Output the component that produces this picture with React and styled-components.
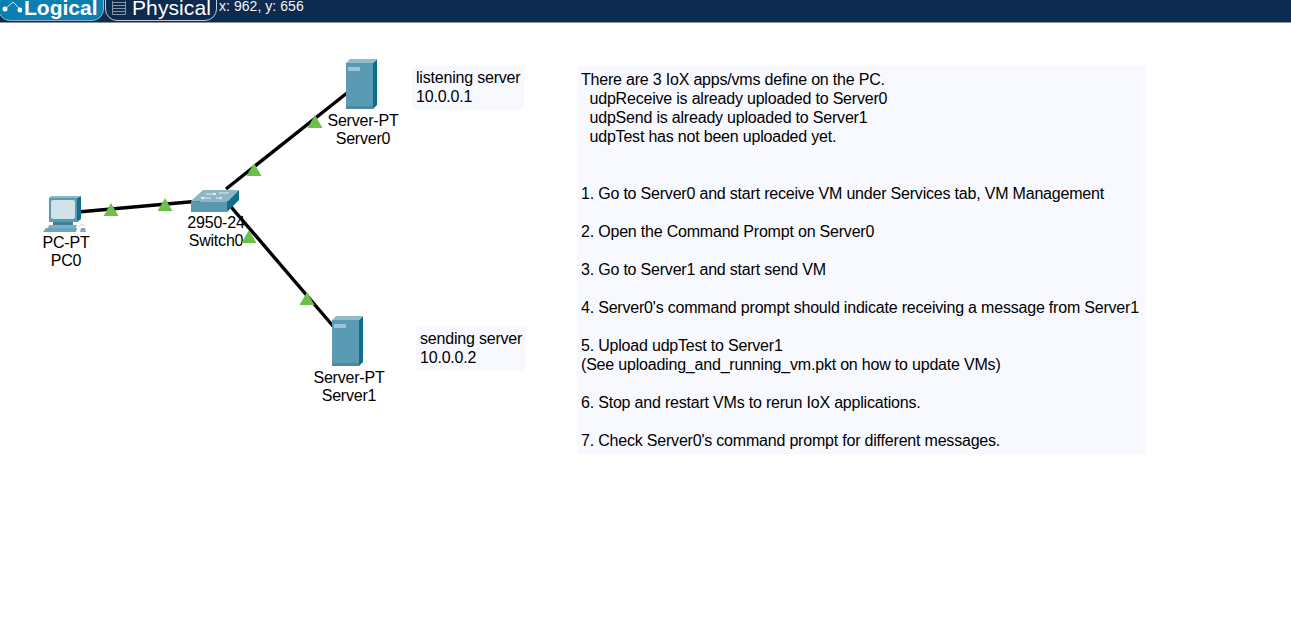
import React from 'react';
import styled, { createGlobalStyle } from 'styled-components';

const Global = createGlobalStyle`
  html, body { margin: 0; padding: 0; background: #fff; overflow: hidden; }
  body { font-family: "Liberation Sans", Arial, sans-serif; }
`;
const Page = styled.div`width: 1291px; height: 632px; overflow: hidden; display: flex; flex-direction: column;`;
const Toolbar = styled.header`
  height: 23px; box-sizing: border-box; flex: none; background: #0d2a4f; border-bottom: 1px solid #8a93a0;
  display: flex; align-items: flex-start; overflow: hidden; color: #fff;
`;
const Tab = styled.div`
  height: 29px; box-sizing: border-box; flex: none; margin-top: -8px; display: flex; align-items: flex-start;
  gap: ${p => p.$gap}px; width: ${p => p.$w}px; padding: 4px 0 0 ${p => p.$pl}px;
  margin-left: ${p => p.$ml}px; margin-right: ${p => p.$mr}px;
  border: 1px solid ${p => p.$active ? '#8fb4cf' : '#c5ccd6'}; border-radius: 0 0 12px 12px;
  background: ${p => p.$active ? '#0b7fb0' : 'transparent'};
  font-size: 21px; line-height: 21px; font-weight: ${p => p.$active ? 700 : 400};
  letter-spacing: ${p => p.$active ? 0 : 0.1}px; white-space: nowrap;
  svg { flex: none; margin-top: 4px; }
`;
const Coords = styled.span`font-size: 14px; line-height: 14px; margin: -1px 0 0 1px; letter-spacing: 0.05px; color: #f2f4f7; white-space: nowrap;`;
const Canvas = styled.main`position: relative; flex: 1;`;
const Links = styled.svg`position: absolute; left: 0; top: 0;`;
const Node = styled.div`
  position: absolute; left: ${p => p.$x}px; top: ${p => p.$y}px; width: 80px;
  display: flex; flex-direction: column; align-items: center; gap: 1px;
  svg { display: block; flex: none; }
`;
const Label = styled.div`
  padding-left: 2px; text-align: center; font-size: 16px; line-height: 18px; letter-spacing: -0.2px; white-space: nowrap; color: #000;
`;
const Note = styled.div`
  position: absolute; left: ${p => p.$x}px; top: ${p => p.$y}px; width: ${p => p.$w}px; height: ${p => p.$h}px;
  box-sizing: border-box; background: #f8f9ff; padding: ${p => p.$pad}; font-size: 16px; line-height: 19px;
  letter-spacing: -0.2px; white-space: pre; color: #000;
`;

const PC = () => (
  <svg width="44" height="38" viewBox="0 0 44 38">
    <path d="M6 3h28v24H6z" fill="#5b9ab0" />
    <path d="M34 3l4-2v23l-4 3z" fill="#0f6f8c" />
    <path d="M6 3l2-2h30l-4 2z" fill="#8db9c9" />
    <rect x="8" y="5" width="24" height="19" rx="2" fill="#cfe2ea" />
    <path d="M10 27h20v3H10z" fill="#3f8099" />
    <path d="M6 30h28l-1 3H5z" fill="#7fb0c2" />
    <path d="M3 33h31l-1 4H0z" fill="#6fa4b8" />
    <path d="M38 33h4l1 4h-6z" fill="#7ea9ba" />
    <path d="M36 32c1-3 4-3 6-1" fill="none" stroke="#bcd3dd" />
  </svg>
);
const Switch = () => (
  <svg width="52" height="25" viewBox="0 0 52 25">
    <path d="M2 13L14 2h36L38 14z" fill="#8db6c5" />
    <path d="M2 13l36 1v10H2z" fill="#5b98ad" />
    <path d="M38 14L50 2v10L38 24z" fill="#0f6f8c" />
    <path d="M17 6h10M24 5l3 1-3 1M30 5h10M12 10h10M15 9l-3 1 3 1M27 10h6M31 9l2 1-2 1" stroke="#e3eef2" strokeWidth="1" fill="none" />
  </svg>
);
const Server = () => (
  <svg width="32" height="52" viewBox="0 0 32 52">
    <path d="M0 4h27v46H0z" fill="#5a9ab3" />
    <path d="M27 4l4-4v46l-4 4z" fill="#0e6f8c" />
    <path d="M0 4l4-4h27l-4 4z" fill="#93bccb" />
    <rect x="2" y="8" width="12" height="4" fill="#9cc4d4" />
    <path d="M0 47h27v3H0z" fill="#4d8aa2" />
  </svg>
);

const main = `There are 3 IoX apps/vms define on the PC.
  udpReceive is already uploaded to Server0
  udpSend is already uploaded to Server1
  udpTest has not been uploaded yet.


1. Go to Server0 and start receive VM under Services tab, VM Management

2. Open the Command Prompt on Server0

3. Go to Server1 and start send VM

4. Server0's command prompt should indicate receiving a message from Server1

5. Upload udpTest to Server1
(See uploading_and_running_vm.pkt on how to update VMs)

6. Stop and restart VMs to rerun IoX applications.

7. Check Server0's command prompt for different messages.`;

const tris = [[111,209],[165,204],[254,169],[315,121],[249,236],[307,298]];

export default function App() {
  return (
    <Page>
      <Global />
      <Toolbar>
        <Tab $active $w={106} $pl={3} $ml={-2} $mr={1} $gap={2}>
          <svg width="20" height="12" viewBox="0 0 20 12"><path d="M3 8L11 1l7 7" fill="none" stroke="#cfe6f0" strokeWidth="1"/><circle cx="3" cy="8" r="2.5" fill="#fff"/><circle cx="18" cy="9" r="2.5" fill="#fff"/></svg>
          Logical
        </Tab>
        <Tab $w={112} $pl={6} $ml={0} $mr={1} $gap={6}>
          <svg width="14" height="14" viewBox="0 0 14 14"><path d="M.5-4h13v17.5H.5zM.5 1.5h13M.5 4.5h13M.5 7.5h13M.5 10.5h13" fill="none" stroke="#8794a8" /></svg>
          Physical
        </Tab>
        <Coords>x: 962, y: 656</Coords>
      </Toolbar>
      <Canvas>
        <Links width="1291" height="609">
          <g stroke="#000" strokeWidth="3.4" fill="none">
            <path d="M78 189L200 178" />
            <path d="M226 166L347 70" />
            <path d="M226 178L333 303" />
          </g>
        </Links>
        <Node $x={25} $y={172}><PC /><Label>PC-PT<br />PC0</Label></Node>
        <Node $x={175} $y={165}><Switch /><Label>2950-24<br />Switch0</Label></Node>
        <Node $x={322} $y={36}><Server /><Label>Server-PT<br />Server0</Label></Node>
        <Node $x={308} $y={293}><Server /><Label>Server-PT<br />Server1</Label></Node>
        <Links width="1291" height="609">
          {tris.map(([x, y]) => <path key={x} d={`M${x} ${y-29}l7.5 13h-15z`} fill="#6cc04a" />)}
        </Links>
        <Note $x={412} $y={43} $w={112} $h={44} $pad="2px 0 0 4px">{'listening server\n10.0.0.1'}</Note>
        <Note $x={416} $y={303} $w={110} $h={45} $pad="3px 0 0 4px">{'sending server\n10.0.0.2'}</Note>
        <Note $x={577} $y={43} $w={568} $h={388} $pad="4px 0 0 4px">{main}</Note>
      </Canvas>
    </Page>
  );
}
